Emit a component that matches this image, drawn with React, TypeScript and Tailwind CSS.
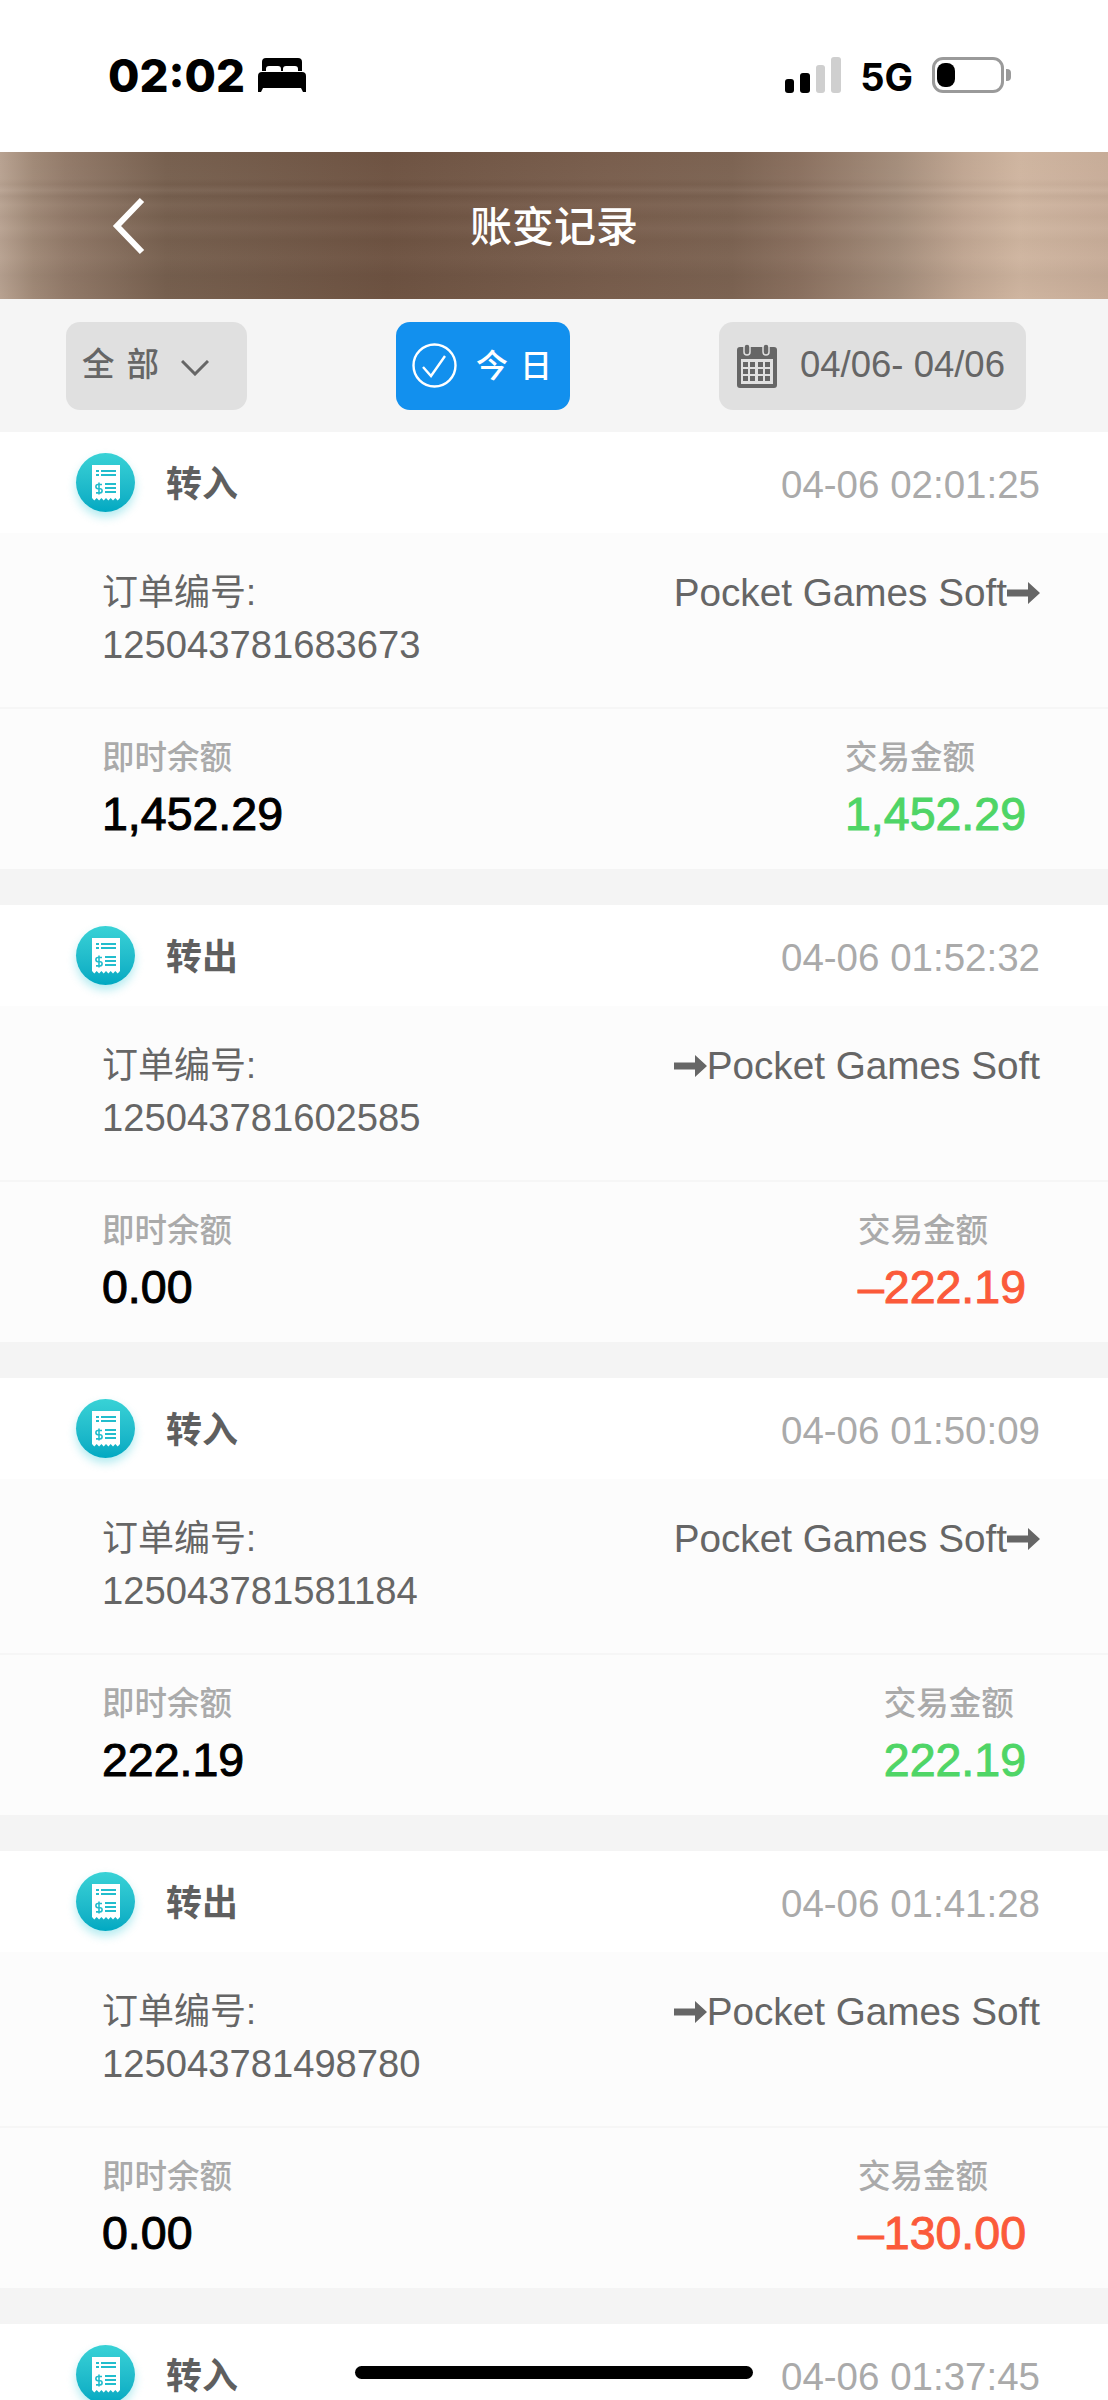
import React from 'react';

const FONT = 'font-["Liberation_Sans","Noto_Sans_CJK_SC",sans-serif]';

interface Record {
  type: string;
  time: string;
  orderNo: string;
  direction: 'in' | 'out';
  balance: string;
  amount: string;
}

const records: Record[] = [
  { type: '转入', time: '04-06 02:01:25', orderNo: '125043781683673', direction: 'in', balance: '1,452.29', amount: '1,452.29' },
  { type: '转出', time: '04-06 01:52:32', orderNo: '125043781602585', direction: 'out', balance: '0.00', amount: '–222.19' },
  { type: '转入', time: '04-06 01:50:09', orderNo: '125043781581184', direction: 'in', balance: '222.19', amount: '222.19' },
  { type: '转出', time: '04-06 01:41:28', orderNo: '125043781498780', direction: 'out', balance: '0.00', amount: '–130.00' },
  { type: '转入', time: '04-06 01:37:45', orderNo: '125043781450012', direction: 'in', balance: '130.00', amount: '130.00' },
];

function Arrow() {
  return (
    <svg width="33" height="24" viewBox="0 0 33 24" className="shrink-0">
      <path d="M0 8.5h21V1l12 11-12 11v-7.5H0z" fill="#666666" />
    </svg>
  );
}

function ReceiptIcon() {
  return (
    <div className="relative w-[59px] h-[59px] shrink-0 rounded-full bg-gradient-to-b from-[#38d2d6] to-[#00a9c2] shadow-[0_5px_10px_rgba(0,190,205,0.3)] flex items-center justify-center">
      <svg width="28" height="36" viewBox="0 0 28 36">
        <path d="M0 0h28v33l-2.3 2.5-2.4-2.5-2.3 2.5-2.3-2.5-2.3 2.5-2.4-2.5-2.3 2.5-2.3-2.5-2.3 2.5-2.4-2.5L2.3 35.5 0 33z" fill="#ffffff" />
        <g fill="#22bdcd">
          <rect x="4" y="5" width="3" height="2" />
          <rect x="9" y="5" width="15" height="2" />
          <rect x="4" y="9" width="3" height="2" />
          <rect x="9" y="9" width="15" height="2" />
          <rect x="13" y="18" width="11" height="2" />
          <rect x="13" y="22" width="11" height="2" />
          <rect x="13" y="26" width="11" height="2" />
        </g>
        <path d="M10 19.5H6a1.6 1.6 0 0 0 0 4.2h2a1.6 1.6 0 0 1 0 4.2H4M7 17.5v12" fill="none" stroke="#22bdcd" strokeWidth="1.6" />
      </svg>
    </div>
  );
}

function RecordCard({ record }: { record: Record }) {
  const isIn = record.direction === 'in';
  return (
    <div className="mb-[36px]">
      {/* Card head */}
      <div className="h-[101px] bg-white flex items-center justify-between pl-[76px] pr-[68px]">
        <div className="flex items-center gap-[31px]">
          <ReceiptIcon />
          <span className="mt-[5px] text-[36px] font-bold text-[#5f5f5f]">{record.type}</span>
        </div>
        <span className="mt-[4px] text-[38.5px] text-[#aaaaaa]">{record.time}</span>
      </div>

      {/* Order info */}
      <div className="h-[176px] bg-[#fcfcfc] border-b-2 border-[#f6f6f6] flex justify-between pl-[102px] pr-[68px] pt-[34px]">
        <div>
          <div className="text-[36px] leading-[52px] text-[#666666]">订单编号:</div>
          <div className="text-[38.2px] leading-[52px] text-[#666666]">{record.orderNo}</div>
        </div>
        <div className="flex items-center h-[52px] text-[38.7px] text-[#666666]">
          {!isIn && <Arrow />}
          <span>Pocket Games Soft</span>
          {isIn && <Arrow />}
        </div>
      </div>

      {/* Balance and amount */}
      <div className="h-[160px] bg-[#fcfcfc] flex justify-between pl-[102px] pr-[82px] pt-[26px]">
        <div>
          <div className="text-[32.5px] leading-[46px] font-medium text-[#aaaaaa]">即时余额</div>
          <div className="text-[46.5px] leading-[66px] font-medium text-black [-webkit-text-stroke:1px_black]">{record.balance}</div>
        </div>
        <div>
          <div className="text-[32.5px] leading-[46px] font-medium text-[#aaaaaa]">交易金额</div>
          <div className={`text-[46.5px] leading-[66px] font-medium ${isIn ? 'text-[#4fd566] [-webkit-text-stroke:1px_#4fd566]' : 'text-[#fb5a3a] [-webkit-text-stroke:1px_#fb5a3a]'}`}>
            {record.amount}
          </div>
        </div>
      </div>
    </div>
  );
}

export default function App() {
  return (
    <div className={`relative h-[2400px] overflow-hidden bg-[#f4f4f4] ${FONT}`}>
      {/* Status bar */}
      <div className="h-[152px] bg-white flex items-start justify-between pl-[108px] pr-[97px] pt-[57px]">
        <div className="flex items-center gap-[13px] h-[36px]">
          <span className="mt-[2px] font-['Inter'] text-[45.5px] leading-[36px] font-extrabold text-black">02:02</span>
          <svg width="48" height="34" viewBox="0 0 48 34">
            <path d="M8 0h32a4 4 0 0 1 4 4v9h-4v-2a3 3 0 0 0-3-3h-9a3 3 0 0 0-3 3v2h-2v-2a3 3 0 0 0-3-3h-9a3 3 0 0 0-3 3v2H4V4a4 4 0 0 1 4-4z" fill="#000" />
            <path d="M4 14h40a4 4 0 0 1 4 4v16h-3l-2-4H5l-2 4H0V18a4 4 0 0 1 4-4z" fill="#000" />
          </svg>
        </div>
        <div className="flex items-center h-[36px]">
          <div className="flex items-end gap-[6px] h-[36px]">
            <div className="w-[9px] h-[14px] rounded-[3px] bg-black" />
            <div className="w-[10px] h-[20px] rounded-[3px] bg-black" />
            <div className="w-[9px] h-[28px] rounded-[3px] bg-[#cfcfcf]" />
            <div className="w-[10px] h-[36px] rounded-[3px] bg-[#cfcfcf]" />
          </div>
          <span className="mt-[4px] ml-[19px] font-['Inter'] text-[38px] leading-[36px] font-bold text-black">5G</span>
          <div className="ml-[19px] w-[72px] h-[36px] rounded-[11px] border-[3px] border-[#9a9a9a] pl-[2px] pt-[3px]">
            <div className="w-[18px] h-[24px] rounded-[8px] bg-black" />
          </div>
          <div className="ml-[2px] w-[5px] h-[12px] rounded-r-[4px] bg-[#9a9a9a]" />
        </div>
      </div>

      {/* Title bar */}
      <div className="relative h-[147px] flex items-center justify-center bg-[linear-gradient(90deg,#b8a291_0%,#a08977_3%,#927a69_6%,#77604f_15%,#6e5342_35%,#795e4d_55%,#7c6352_66%,#8a705f_72%,#a48d7b_81%,#c0a692_87%,#cfb5a0_92%,#c7ac98_100%)]">
        <div className="absolute inset-0 bg-[linear-gradient(180deg,rgba(255,255,255,0)_0%,rgba(255,255,255,0.02)_18%,rgba(0,0,0,0.02)_22%,rgba(255,255,255,0.05)_26%,rgba(0,0,0,0.03)_30%,rgba(255,255,255,0.03)_36%,rgba(0,0,0,0.02)_44%,rgba(255,255,255,0.03)_52%,rgba(0,0,0,0.02)_60%,rgba(255,255,255,0.02)_72%,rgba(0,0,0,0.03)_84%,rgba(255,255,255,0)_100%)]" />
        <svg width="35" height="58" viewBox="0 0 35 58" className="absolute left-[111px] top-[45px]">
          <path d="M31 3 6 29l25 26" fill="none" stroke="#ffffff" strokeWidth="6" />
        </svg>
        <span className="relative mt-[3px] text-[42px] font-medium text-white">账变记录</span>
      </div>

      {/* Filter bar */}
      <div className="h-[133px] bg-[#f5f5f5] flex items-center justify-between pl-[66px] pr-[82px]">
        <div className="w-[181px] h-[88px] rounded-[14px] bg-[#e0e0e0] flex items-center pl-[16px]">
          <span className="text-[32.5px] tracking-[12px] font-medium text-[#666666]">全部</span>
          <svg width="28" height="16" viewBox="0 0 28 16" className="ml-[10px] mt-[4px]">
            <path d="M1 1l13 13L27 1" fill="none" stroke="#666666" strokeWidth="3" />
          </svg>
        </div>
        <div className="w-[174px] h-[88px] rounded-[14px] bg-[#1290ee] flex items-center pl-[16px]">
          <svg width="45" height="45" viewBox="0 0 45 45">
            <circle cx="22.5" cy="22.5" r="21" fill="none" stroke="#ffffff" strokeWidth="2.4" />
            <path d="M11 24l8 9 14-20" fill="none" stroke="#ffffff" strokeWidth="2.4" />
          </svg>
          <span className="ml-[19px] text-[32px] tracking-[12px] font-medium text-white">今日</span>
        </div>
        <div className="w-[307px] h-[88px] rounded-[14px] bg-[#e0e0e0] flex items-center pl-[18px]">
          <svg width="40" height="44" viewBox="0 0 40 44">
            <rect x="0" y="3" width="40" height="41" rx="3" fill="#666666" />
            <rect x="4" y="15" width="32" height="25" fill="#e0e0e0" />
            <rect x="7" y="0" width="6" height="11" rx="3" fill="#666666" stroke="#e0e0e0" strokeWidth="1.5" />
            <rect x="26" y="0" width="6" height="11" rx="3" fill="#666666" stroke="#e0e0e0" strokeWidth="1.5" />
            <g fill="#666666">
              <rect x="6" y="18" width="5" height="5" /><rect x="13" y="18" width="5" height="5" /><rect x="21" y="18" width="5" height="5" /><rect x="28" y="18" width="5" height="5" />
              <rect x="6" y="25" width="5" height="5" /><rect x="13" y="25" width="5" height="5" /><rect x="21" y="25" width="5" height="5" /><rect x="28" y="25" width="5" height="5" />
              <rect x="6" y="32" width="5" height="5" /><rect x="13" y="32" width="5" height="5" /><rect x="21" y="32" width="5" height="5" /><rect x="28" y="32" width="5" height="5" />
            </g>
          </svg>
          <span className="ml-[23px] text-[36.5px] text-[#666666]">04/06- 04/06</span>
        </div>
      </div>

      {/* Records */}
      <div>
        {records.map((record) => (
          <RecordCard key={record.orderNo} record={record} />
        ))}
      </div>

      {/* Home indicator */}
      <div className="absolute left-[355px] top-[2366px] w-[398px] h-[13px] rounded-full bg-black" />
    </div>
  );
}
